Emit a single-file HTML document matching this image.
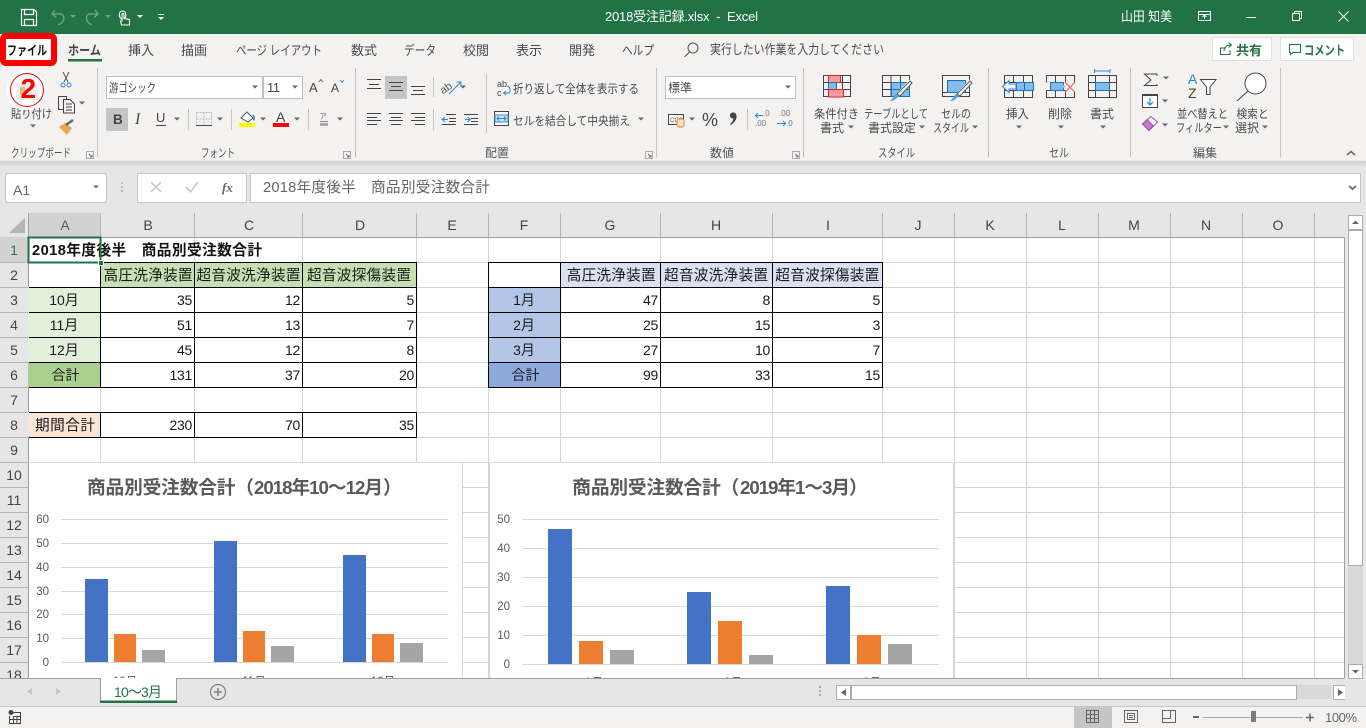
<!DOCTYPE html>
<html lang="ja">
<head>
<meta charset="utf-8">
<title>2018受注記録.xlsx - Excel</title>
<style>
html,body{margin:0;padding:0;background:#fff;overflow:hidden}
svg{display:block}
text{font-family:"Liberation Sans","Noto Sans CJK JP",sans-serif;white-space:pre}
.r{font-size:12px;fill:#4a4a4a}
.tab{font-size:13px;fill:#4a4a4a}
.g{font-size:12px;fill:#555}
.c{font-size:14.67px;fill:#1a1a1a}
.n{font-size:14px;fill:#1a1a1a;text-anchor:end;letter-spacing:-.3px}
.m{font-size:14px;fill:#1a1a1a;text-anchor:middle}
.h{font-size:14px;fill:#444;text-anchor:middle}
.y{font-size:11.5px;fill:#595959;text-anchor:end}
.x{font-size:11.5px;fill:#595959;text-anchor:middle}
.ct{font-size:18.67px;font-weight:bold;fill:#595959}
</style>
</head>
<body>
<svg xmlns="http://www.w3.org/2000/svg" width="1366" height="728" viewBox="0 0 1366 728">
<defs>
<polygon id="a" points="-3,-1.5 3,-1.5 0,1.5" fill="#666"/>
<linearGradient id="sh" x1="0" y1="0" x2="0" y2="1"><stop offset="0" stop-color="#cfcfcf"/><stop offset="1" stop-color="#e6e6e6"/></linearGradient>
</defs>

<!-- backgrounds -->
<rect width="1366" height="728" fill="#e6e6e6"/>
<rect width="1366" height="34" fill="#217346"/>
<rect y="34" width="1366" height="127" fill="#f3f2f1"/>
<rect y="161" width="1366" height="6" fill="url(#sh)"/>

<!-- title bar -->
<g fill="none" stroke="#fff" stroke-width="1.2">
<path d="M21.5 9.5H34L36.5 12V25.5H21.5Z"/><path d="M24.5 9.5V14.5H33.5V9.5"/><path d="M24.5 25.5V19.5H33.5V25.5"/>
</g>
<g fill="none" stroke="#6ba583" stroke-width="1.4">
<path d="M55 10L52 14L56 17.500"/><path d="M52.500 14H60C65 14 66 22 58 25"/>
<path d="M95 10L98 14L94 17.500"/><path d="M97.500 14H90C85 14 85 22 92 25"/>
</g>
<polygon points="70,15 76,15 73,18" fill="#6ba583"/><polygon points="105,15 111,15 108,18" fill="#6ba583"/>
<path d="M121.500 19C118.500 17 118.500 11 122.500 11C126.500 11 126.500 17 124.500 18.500" fill="none" stroke="#fff" stroke-width="1.100"/>
<path d="M121.500 25L120.500 21H122V14.500C122 13 124 13 124 14.500V18.500L129.500 19.500V25Z" fill="#217346" stroke="#fff" stroke-width="1.100"/>
<polygon points="137,15 143,15 140,18" fill="#fff"/>
<rect x="158" y="14" width="6" height="1" fill="#fff"/><polygon points="158,17 164,17 161,20" fill="#fff"/>
<text x="605" y="21" font-size="13" fill="#fff" textLength="153" lengthAdjust="spacing">2018受注記録.xlsx  -  Excel</text>
<text x="1121" y="21" font-size="13" fill="#fff" textLength="51" lengthAdjust="spacingAndGlyphs">山田 知美</text>
<g fill="none" stroke="#fff" stroke-width="1">
<rect x="1198.500" y="11.500" width="12" height="9"/><path d="M1198.500 14.500H1210.500M1204.500 19V15.500M1202.500 17L1204.500 15L1206.500 17"/>
<path d="M1246 17.500H1256"/>
<rect x="1292.500" y="13.500" width="7" height="7"/><path d="M1294.500 13.500V11.500H1301.500V18.500H1299.500"/>
<path d="M1338.500 11.500L1348.500 21.500M1348.500 11.500L1338.500 21.500"/>
</g>

<!-- tabs -->
<rect x="3" y="36" width="51" height="27" rx="3" fill="#fff" stroke="#ff0000" stroke-width="6"/>
<text x="7" y="55" font-size="13" font-weight="bold" fill="#111" textLength="40" lengthAdjust="spacingAndGlyphs">ファイル</text>
<text x="68" y="55" font-size="13" font-weight="bold" fill="#444" textLength="33" lengthAdjust="spacingAndGlyphs">ホーム</text>
<rect x="68" y="59" width="34" height="2.500" fill="#217346"/>
<text class="tab" x="128" y="55" textLength="26">挿入</text>
<text class="tab" x="181" y="55" textLength="26">描画</text>
<text class="tab" x="236" y="55" textLength="86" lengthAdjust="spacingAndGlyphs">ページ レイアウト</text>
<text class="tab" x="351" y="55" textLength="26">数式</text>
<text class="tab" x="404" y="55" textLength="32" lengthAdjust="spacingAndGlyphs">データ</text>
<text class="tab" x="463" y="55" textLength="26">校閲</text>
<text class="tab" x="516" y="55" textLength="26">表示</text>
<text class="tab" x="569" y="55" textLength="26">開発</text>
<text class="tab" x="622" y="55" textLength="32" lengthAdjust="spacingAndGlyphs">ヘルプ</text>
<g fill="none" stroke="#555" stroke-width="1.100"><circle cx="693" cy="48" r="5"/><path d="M689.500 52L684.500 57"/></g>
<text class="tab" x="710" y="54" font-size="12.500" textLength="174" lengthAdjust="spacingAndGlyphs">実行したい作業を入力してください</text>
<rect x="1212.500" y="37.500" width="59" height="23" rx="1" fill="#fff" stroke="#e1dfdd"/>
<rect x="1280.500" y="37.500" width="73" height="23" rx="1" fill="#fff" stroke="#e1dfdd"/>
<g fill="none" stroke="#217346" stroke-width="1"><path d="M1226 48H1220.500V54.500H1230V50"/><path d="M1224 51C1224 47 1227 45 1231 45M1228.500 42.500L1231.500 45L1228.500 47.500"/>
<path d="M1289.500 44.500H1300.500V52.500H1293L1290.500 54.500V52.500H1289.500Z"/></g>
<text x="1236" y="55" font-size="13" font-weight="bold" fill="#217346" textLength="26">共有</text>
<text x="1304" y="55" font-size="13" font-weight="bold" fill="#217346" textLength="41" lengthAdjust="spacingAndGlyphs">コメント</text>

<!-- ribbon separators -->
<g stroke="#c3c3c3" fill="none">
<path d="M97.500 68V157M355.500 68V157M656.500 68V157M803.500 68V157M988.500 68V157M1130.500 68V157M1280.500 68V157"/>
<path d="M188.500 109V130M231.500 109V130M308.500 109V130M433.500 77V97M433.500 109V130M486.500 74V133M747.500 109V130"/>
</g>

<!-- clipboard -->
<g fill="none" stroke="#555" stroke-width="1"><path d="M63 72L68 82M69 72L64 82"/></g>
<circle cx="63" cy="85" r="2" fill="none" stroke="#2b88d8"/><circle cx="69" cy="85" r="2" fill="none" stroke="#2b88d8"/>
<g fill="none" stroke="#444" stroke-width="1"><path d="M58.500 96.500H66.500V99M58.500 96.500V109.500H63"/><path d="M63.500 99.500H70L74.500 104V113H63.500Z"/><path d="M66 104H72M66 107H72M66 110H72"/></g>
<use href="#a" x="82" y="103"/>
<path d="M59 127L67 135L72 128L65 123Z" fill="#f0a24e"/><path d="M66 125L73 120" stroke="#666" stroke-width="2.500" fill="none"/>
<text class="r" x="11" y="118" textLength="41" lengthAdjust="spacingAndGlyphs">貼り付け</text>
<use href="#a" x="33" y="126"/>
<circle cx="26" cy="90" r="20" fill="#fff"/>
<path d="M16 84H38V100H16Z" fill="#e6e6e6" opacity=".6"/>
<rect x="20" y="87" width="5" height="8" fill="#f4b37a"/>
<circle cx="27" cy="90" r="16.500" fill="none" stroke="#ff0000" stroke-width="1"/>
<text x="20.500" y="98" font-size="28" font-weight="bold" fill="#ff0000">2</text>
<text class="g" x="11" y="157" textLength="60" lengthAdjust="spacingAndGlyphs">クリップボード</text>
<g fill="none" stroke="#777"><path d="M86.500 151.500H93.500V158.500H86.500Z" stroke="#aaa"/><path d="M89 154L92 157M92 155V157H90"/></g>

<!-- font -->
<rect x="106.500" y="76.500" width="156" height="22" fill="#fff" stroke="#c0c0c0"/>
<rect x="263.500" y="76.500" width="39" height="22" fill="#fff" stroke="#c0c0c0"/>
<text class="r" x="109" y="92" textLength="47" lengthAdjust="spacingAndGlyphs">游ゴシック</text>
<text class="r" x="267" y="92" style="font-size:13px" textLength="13">11</text>
<use href="#a" x="255" y="87"/><use href="#a" x="295" y="87"/>
<text x="309" y="92" font-size="13" fill="#444">A</text><text x="331" y="92" font-size="12" fill="#444">A</text>
<path d="M319 82L321 79.500L323 82" fill="none" stroke="#666"/><path d="M340 80L342 82.500L344 80" fill="none" stroke="#2b88d8"/>
<rect x="106" y="108" width="22" height="23" fill="#c5c5c5"/>
<text x="113" y="124" font-size="13.500" font-weight="bold" fill="#444">B</text>
<text x="135" y="124" fill="#444" style="font-family:'Liberation Serif',serif;font-size:16px;font-style:italic">I</text>
<text x="156" y="122" font-size="13" fill="#444">U</text><rect x="156" y="125" width="10" height="1" fill="#444"/>
<use href="#a" x="177" y="119"/>
<path d="M196.500 112.500H211.500V125.500H196.500ZM204 112.500V125.500M196.500 119H211.500" fill="none" stroke="#bbb" stroke-dasharray="2 1"/><rect x="196" y="125" width="16" height="1" fill="#444"/>
<use href="#a" x="220" y="119"/>
<path d="M241 118L247 112L253 118L248 122Z" fill="#fff" stroke="#555"/><path d="M253 115C255 118 254 120 253 120" fill="none" stroke="#2b88d8" stroke-width="1.500"/>
<rect x="239" y="123" width="16" height="4" fill="#ffff00"/>
<use href="#a" x="263" y="119"/>
<text x="276" y="122" font-size="14" fill="#444">A</text>
<rect x="273" y="123" width="16" height="4" fill="#ff0000"/>
<use href="#a" x="297" y="119"/>
<text x="319" y="119" font-size="8" fill="#777">ア</text><rect x="320" y="121" width="8" height="1" fill="#888"/><rect x="320" y="123" width="8" height="3" fill="#aaa"/>
<use href="#a" x="340" y="119"/>
<text class="g" x="201" y="157" textLength="34" lengthAdjust="spacingAndGlyphs">フォント</text>
<g fill="none" stroke="#777"><path d="M343.500 151.500H350.500V158.500H343.500Z" stroke="#aaa"/><path d="M346 154L349 157M349 155V157H347"/></g>

<!-- alignment -->
<rect x="385" y="76" width="22" height="23" fill="#c5c5c5"/>
<g stroke="#444" fill="none">
<path d="M367 79.500H381M369 84.500H379M367 88.500H381"/>
<path d="M389 82.500H403M391 86.500H401M389 90.500H403"/>
<path d="M411 86.500H425M413 90.500H423M411 94.500H425"/>
<path d="M367 113.500H381M367 117.500H377M367 120.500H381M367 124.500H377"/>
<path d="M389 113.500H403M391 117.500H401M389 120.500H403M391 124.500H401"/>
<path d="M411 113.500H425M415 117.500H425M411 120.500H425M415 124.500H425"/>
<path d="M446 114.500H456M449 118.500H456M449 121.500H456M442 124.500H456"/>
<path d="M464 114.500H478M471 118.500H478M471 121.500H478M464 124.500H478"/>
</g>
<path d="M448 119.500H442M445 117L442 119.500L445 122M465 119.500H470M467.500 117L470.500 119.500L467.500 122" fill="none" stroke="#2b88d8"/>
<text x="440" y="91" font-size="11" fill="#555" transform="rotate(-35 447 88)">ab</text>
<path d="M449 94L461 82M456.500 82H461V86.500" fill="none" stroke="#2b88d8"/>
<use href="#a" x="463" y="87"/>
<text x="497" y="87" font-size="9" fill="#444">ab</text><text x="497" y="96" font-size="9" fill="#444">c</text>
<path d="M503 93H509C511 91 510 86 507 86M506 91L503.500 93L506 95" fill="none" stroke="#2b88d8"/>
<text class="r" x="513" y="93" textLength="126" lengthAdjust="spacingAndGlyphs">折り返して全体を表示する</text>
<rect x="494.500" y="111.500" width="14" height="14" fill="#fff" stroke="#444"/><rect x="495" y="115" width="13" height="7" fill="#cfe4f7" stroke="#2b88d8"/>
<path d="M497 118.500H506M499 116.500L497 118.500L499 120.500M504 116.500L506 118.500L504 120.500" fill="none" stroke="#2b88d8"/>
<text class="r" x="513" y="125" textLength="117" lengthAdjust="spacingAndGlyphs">セルを結合して中央揃え</text>
<use href="#a" x="641" y="119"/>
<text class="g" x="485" y="157" textLength="24">配置</text>
<g fill="none" stroke="#777"><path d="M645.500 151.500H652.500V158.500H645.500Z" stroke="#aaa"/><path d="M648 154L651 157M651 155V157H649"/></g>

<!-- number -->
<rect x="665.500" y="76.500" width="130" height="22" fill="#fff" stroke="#c0c0c0"/>
<text class="r" x="668" y="92" textLength="24">標準</text>
<use href="#a" x="788" y="87"/>
<rect x="668.500" y="114.500" width="15" height="10" fill="#fff" stroke="#444"/><text x="670" y="122" font-size="6" fill="#444">CCC</text>
<rect x="677" y="119" width="7" height="8" rx="2" fill="#fbe3c8" stroke="#ed7d31"/>
<use href="#a" x="692" y="119"/>
<text x="702" y="126" font-size="18" fill="#444">%</text>
<path d="M733 112.500C736 112.500 737 115 736.500 117.500C736 120.500 733.500 123.500 730.500 125L730 124C732 122.500 733 120.500 733.500 118.500C731.500 118.500 730 117.500 730 115.500C730 113.500 731.500 112.500 733 112.500Z" fill="#444"/>
<text x="763" y="116" font-size="8" fill="#777">.0</text><text x="755" y="126" font-size="8" fill="#777">.00</text>
<text x="779" y="116" font-size="8" fill="#777">.00</text><text x="786" y="126" font-size="8" fill="#777">.0</text>
<path d="M755 115.500H763M758 113L755.500 115.500L758 118M777 123.500H786M783 121L785.500 123.500L783 126" fill="none" stroke="#2b88d8"/>
<text class="g" x="710" y="157" textLength="24">数値</text>
<g fill="none" stroke="#777"><path d="M792.500 151.500H799.500V158.500H792.500Z" stroke="#aaa"/><path d="M795 154L798 157M798 155V157H796"/></g>

<!-- styles -->
<g fill="none" stroke="#444">
<path d="M823.500 75.500H850.500V96.500H823.500ZM823.500 82.500H850.500M823.500 89.500H850.500M829 75.500V96.500M835.500 75.500V96.500M842.500 75.500V96.500"/>
<path d="M882.500 75.500H909.500V96.500H882.500ZM882.500 82.500H909.500M882.500 89.500H909.500M891 75.500V96.500M900.500 75.500V96.500"/>
<path d="M942.500 75.500H969.500V96.500H942.500ZM942.500 92.500H969.500"/>
</g>
<rect x="828.500" y="75.500" width="12" height="7" fill="#ff9aa2" stroke="#e2232a"/>
<rect x="828.500" y="82.500" width="8" height="7" fill="#83bbea" stroke="#1a73ba"/>
<rect x="828.500" y="89.500" width="15" height="7.500" fill="#ff9aa2" stroke="#e2232a"/>
<rect x="891.500" y="82.500" width="18" height="14" fill="#83bbea" stroke="#1a73ba"/><path d="M900.500 82.500V96.500M891.500 89.500H909.500" stroke="#1a73ba"/>
<rect x="947.500" y="80.500" width="18" height="12" fill="#83bbea" stroke="#1a73ba"/>
<path d="M911 81L898 95" stroke="#fff" stroke-width="4"/><path d="M910 81L912 83L900 96L897 94Z" fill="#fff" stroke="#555"/>
<path d="M892 101C895 100 897 98 899 96L896 94C894 95 893 99 890 101Z" fill="#5aa5e0"/>
<path d="M971 81L958 95" stroke="#fff" stroke-width="4"/><path d="M970 81L972 83L960 96L957 94Z" fill="#fff" stroke="#555"/>
<path d="M952 101C955 100 957 98 959 96L956 94C954 95 953 99 950 101Z" fill="#5aa5e0"/>
<text class="r" x="814" y="118" textLength="45" lengthAdjust="spacingAndGlyphs">条件付き</text>
<text class="r" x="820" y="132" textLength="24">書式</text><use href="#a" x="851" y="127"/>
<text class="r" x="864" y="118" textLength="64" lengthAdjust="spacingAndGlyphs">テーブルとして</text>
<text class="r" x="868" y="132" textLength="48">書式設定</text><use href="#a" x="922" y="127"/>
<text class="r" x="941" y="118" textLength="30" lengthAdjust="spacingAndGlyphs">セルの</text>
<text class="r" x="933" y="132" textLength="36" lengthAdjust="spacingAndGlyphs">スタイル</text><use href="#a" x="975" y="127"/>
<text class="g" x="878" y="157" textLength="37" lengthAdjust="spacingAndGlyphs">スタイル</text>

<!-- cells -->
<g fill="none" stroke="#444">
<path d="M1004.500 75.500H1032.500V97.500H1004.500ZM1004.500 82.500H1016M1004.500 90.500H1032.500M1013.500 75.500V82M1013.500 90.500V97.500M1023.500 75.500V97.500"/>
<path d="M1046.500 75.500H1074.500V82.500M1046.500 82.500V75.500M1046.500 90.500V97.500H1074.500V92M1046.500 90.500H1065M1055.500 90.500V97.500M1065.500 75.500V82M1065.500 90.500V97.500M1055.500 75.500V82"/>
<path d="M1088.500 75.500H1116.500V97.500H1088.500ZM1088.500 82.500H1116.500M1088.500 90.500H1116.500M1095.500 75.500V97.500M1109.500 75.500V97.500"/>
</g>
<rect x="1016.500" y="82.500" width="17" height="8" fill="#83bbea" stroke="#1a73ba"/><path d="M1024.500 82.500V90.500" stroke="#1a73ba"/>
<path d="M1002.500 86.500L1009 80.500V84H1016V89H1009V92.500Z" fill="#f3f2f1" stroke="#2b88d8"/>
<rect x="1050.500" y="82.500" width="13" height="8" fill="#83bbea" stroke="#1a73ba"/><path d="M1059.500 82.500L1066 86.500L1059.500 90.500Z" fill="#83bbea"/>
<path d="M1065 82L1075 92.500M1075 82L1065 92.500" stroke="#ff4d4d" fill="none"/>
<rect x="1095.500" y="82.500" width="14" height="8" fill="#83bbea" stroke="#1a73ba"/>
<path d="M1094.500 69V73M1110 69V73M1094.500 71H1110" stroke="#2b88d8" fill="none"/>
<text class="r" x="1006" y="118" textLength="23" lengthAdjust="spacingAndGlyphs">挿入</text><use href="#a" x="1019" y="127"/>
<text class="r" x="1048" y="118" textLength="24">削除</text><use href="#a" x="1061" y="127"/>
<text class="r" x="1090" y="118" textLength="24">書式</text><use href="#a" x="1103" y="127"/>
<text class="g" x="1049" y="157" textLength="20" lengthAdjust="spacingAndGlyphs">セル</text>

<!-- editing -->
<path d="M1157 76V74H1144.500L1151 80L1144.500 85.500H1157V84" fill="none" stroke="#444"/>
<use href="#a" x="1166" y="78"/>
<rect x="1142.500" y="94.500" width="15" height="13" fill="#fff" stroke="#444"/><rect x="1142" y="94" width="16" height="2" fill="#444"/>
<path d="M1150 98V105M1147 102L1150 105L1153 102" fill="none" stroke="#2b88d8" stroke-width="1.200"/>
<use href="#a" x="1165" y="101"/>
<path d="M1142.500 124L1151 116.500L1157.500 122L1149 130.500Z" fill="#fff" stroke="#a349b0"/><path d="M1142.500 124L1147 119.500L1153 125.500L1149 130.500Z" fill="#c27ccc" stroke="#a349b0"/>
<use href="#a" x="1165" y="125"/>
<text x="1188" y="84" font-size="14" fill="#2b88d8">A</text>
<text x="1188" y="98" font-size="14" fill="#444">Z</text>
<path d="M1200.500 79.500H1216L1210 87V94.500H1206.500V87Z" fill="#fff" stroke="#444"/>
<text class="r" x="1177" y="118" textLength="51" lengthAdjust="spacingAndGlyphs">並べ替えと</text>
<text class="r" x="1176" y="132" textLength="46" lengthAdjust="spacingAndGlyphs">フィルター</text><use href="#a" x="1226" y="127"/>
<circle cx="1255.500" cy="83.500" r="10.500" fill="#fff" stroke="#444"/><path d="M1248 91L1237 101" stroke="#444" fill="none"/>
<text class="r" x="1236.500" y="118" textLength="32" lengthAdjust="spacingAndGlyphs">検索と</text>
<text class="r" x="1235" y="132" textLength="24">選択</text><use href="#a" x="1265" y="127"/>
<text class="g" x="1193" y="157" textLength="24">編集</text>
<path d="M1347 155L1351 151.500L1355 155" fill="none" stroke="#666" stroke-width="1.500"/>

<!-- formula bar -->
<rect x="5.500" y="173.500" width="101" height="29" fill="#fff" stroke="#c6c6c6"/>
<text x="13" y="195" font-size="14" fill="#666">A1</text>
<use href="#a" x="96" y="187"/>
<rect x="121" y="182" width="2" height="2" fill="#bbb"/><rect x="121" y="186" width="2" height="2" fill="#bbb"/><rect x="121" y="190" width="2" height="2" fill="#bbb"/>
<rect x="137.500" y="173.500" width="109" height="29" fill="#fff" stroke="#c6c6c6"/>
<path d="M151 182L161 192M161 182L151 192" stroke="#c4c4c4" stroke-width="1.500" fill="none"/>
<path d="M186 187L190.500 192L198 182" stroke="#c4c4c4" stroke-width="1.500" fill="none"/>
<text x="222" y="192" font-size="13" font-style="italic" font-weight="bold" fill="#666" style="font-family:'Liberation Serif',serif">fx</text>
<rect x="250.500" y="173.500" width="1110" height="29" fill="#fff" stroke="#c6c6c6"/>
<text x="263" y="192" font-size="14.670" fill="#666" textLength="227">2018年度後半　商品別受注数合計</text>
<path d="M1349 186L1352.500 189L1356 186" fill="none" stroke="#777" stroke-width="2"/>

<!-- sheet -->
<rect x="28" y="237" width="1316" height="441" fill="#fff"/>
<rect x="28" y="213" width="72" height="24" fill="#d2d2d2"/>
<rect x="0" y="237" width="28" height="25" fill="#d2d2d2"/>
<polygon points="25,218 25,233 9,233" fill="#b4b4b4"/>
<path d="M100.500 237V678M194.500 237V678M302.500 237V678M416.500 237V678M488.500 237V678M560.500 237V678M660.500 237V678M772.500 237V678M882.500 237V678M954.500 237V678M1026.500 237V678M1098.500 237V678M1170.500 237V678M1242.500 237V678M1314.500 237V678" stroke="#d4d4d4" fill="none"/>
<path d="M28 262.500H1344M28 287.500H1344M28 312.500H1344M28 337.500H1344M28 362.500H1344M28 387.500H1344M28 412.500H1344M28 437.500H1344M28 462.500H1344M28 487.500H1344M28 512.500H1344M28 537.500H1344M28 562.500H1344M28 587.500H1344M28 612.500H1344M28 637.500H1344M28 662.500H1344" stroke="#d4d4d4" fill="none"/>
<!-- header lines -->
<path d="M100.500 213V237M194.500 213V237M302.500 213V237M416.500 213V237M488.500 213V237M560.500 213V237M660.500 213V237M772.500 213V237M882.500 213V237M954.500 213V237M1026.500 213V237M1098.500 213V237M1170.500 213V237M1242.500 213V237M1314.500 213V237" stroke="#b5b5b5" fill="none"/>
<path d="M0 262.500H28M0 287.500H28M0 312.500H28M0 337.500H28M0 362.500H28M0 387.500H28M0 412.500H28M0 437.500H28M0 462.500H28M0 487.500H28M0 512.500H28M0 537.500H28M0 562.500H28M0 587.500H28M0 612.500H28M0 637.500H28M0 662.500H28" stroke="#b5b5b5" fill="none"/>
<path d="M28 237.500H1344.500V678M28.500 213V678" stroke="#a0a0a0" fill="none"/>
<g class="hdr">
<text class="h" x="65" y="230" style="fill:#3a6b52">A</text>
<text class="h" x="148" y="230">B</text><text class="h" x="249" y="230">C</text><text class="h" x="360" y="230">D</text><text class="h" x="452" y="230">E</text>
<text class="h" x="524" y="230">F</text><text class="h" x="610" y="230">G</text><text class="h" x="716" y="230">H</text><text class="h" x="828" y="230">I</text><text class="h" x="918" y="230">J</text>
<text class="h" x="990" y="230">K</text><text class="h" x="1062" y="230">L</text><text class="h" x="1134" y="230">M</text><text class="h" x="1206" y="230">N</text><text class="h" x="1278" y="230">O</text>
<text class="h" x="14" y="255" style="fill:#3a6b52">1</text><text class="h" x="14" y="280">2</text><text class="h" x="14" y="305">3</text><text class="h" x="14" y="330">4</text><text class="h" x="14" y="355">5</text><text class="h" x="14" y="380">6</text><text class="h" x="14" y="405">7</text><text class="h" x="14" y="430">8</text><text class="h" x="14" y="455">9</text>
<text class="h" x="14" y="480">10</text><text class="h" x="14" y="505">11</text><text class="h" x="14" y="530">12</text><text class="h" x="14" y="555">13</text><text class="h" x="14" y="580">14</text><text class="h" x="14" y="605">15</text><text class="h" x="14" y="630">16</text><text class="h" x="14" y="655">17</text><text class="h" x="14" y="680">18</text>
</g>

<!-- fills table 1 -->
<rect x="100" y="262" width="316" height="25" fill="#c6e0b4"/>
<rect x="28" y="287" width="72" height="75" fill="#e2efda"/>
<rect x="28" y="362" width="72" height="25" fill="#a9d08e"/>
<rect x="28" y="412" width="72" height="25" fill="#fce4d6"/>
<!-- fills table 2 -->
<rect x="560" y="262" width="322" height="25" fill="#d9e1f2"/>
<rect x="488" y="287" width="72" height="75" fill="#b4c6e7"/>
<rect x="488" y="362" width="72" height="25" fill="#8ea9db"/>
<path d="M100.500 262.500H416.500V387.500M29 287.500H416.500M29 312.500H416.500M29 337.500H416.500M29 362.500H416.500M29 387.500H416.500M100.500 262.500V387.500M194.500 262.500V387.500M302.500 262.500V387.500M29 412.500H416.500M29 437.500H416.500M100.500 412.500V437.500M194.500 412.500V437.500M302.500 412.500V437.500M416.500 412.500V437.500" stroke="#000" fill="none"/>
<path d="M488.500 262.500H882.500V387.500H488.500ZM488.500 287.500H882.500M488.500 312.500H882.500M488.500 337.500H882.500M488.500 362.500H882.500M560.500 262.500V387.500M660.500 262.500V387.500M772.500 262.500V387.500" stroke="#000" fill="none"/>

<!-- cell text -->
<text x="32" y="255" font-size="14.670" font-weight="bold" fill="#111" textLength="230">2018年度後半　商品別受注数合計</text>
<text class="c" x="103.500" y="280" textLength="89">高圧洗浄装置</text>
<text class="c" x="196.500" y="280" textLength="104">超音波洗浄装置</text>
<text class="c" x="307" y="280" textLength="104">超音波探傷装置</text>
<text class="m" x="64" y="305">10月</text><text class="m" x="64" y="330">11月</text><text class="m" x="64" y="355">12月</text>
<text class="m" x="65.500" y="380">合計</text>
<text class="c" x="35" y="430" textLength="60">期間合計</text>
<text class="n" x="192" y="305">35</text><text class="n" x="300" y="305">12</text><text class="n" x="414" y="305">5</text>
<text class="n" x="192" y="330">51</text><text class="n" x="300" y="330">13</text><text class="n" x="414" y="330">7</text>
<text class="n" x="192" y="355">45</text><text class="n" x="300" y="355">12</text><text class="n" x="414" y="355">8</text>
<text class="n" x="192" y="380">131</text><text class="n" x="300" y="380">37</text><text class="n" x="414" y="380">20</text>
<text class="n" x="192" y="430">230</text><text class="n" x="300" y="430">70</text><text class="n" x="414" y="430">35</text>

<text class="c" x="566.700" y="280" textLength="89">高圧洗浄装置</text>
<text class="c" x="664" y="280" textLength="104">超音波洗浄装置</text>
<text class="c" x="775.300" y="280" textLength="104">超音波探傷装置</text>
<text class="m" x="524" y="305">1月</text><text class="m" x="524" y="330">2月</text><text class="m" x="524" y="355">3月</text><text class="m" x="525.500" y="380">合計</text>
<text class="n" x="658" y="305">47</text><text class="n" x="770" y="305">8</text><text class="n" x="880" y="305">5</text>
<text class="n" x="658" y="330">25</text><text class="n" x="770" y="330">15</text><text class="n" x="880" y="330">3</text>
<text class="n" x="658" y="355">27</text><text class="n" x="770" y="355">10</text><text class="n" x="880" y="355">7</text>
<text class="n" x="658" y="380">99</text><text class="n" x="770" y="380">33</text><text class="n" x="880" y="380">15</text>

<!-- selection -->
<rect x="28.500" y="237.500" width="72" height="25" fill="none" stroke="#217346" stroke-width="2"/>
<rect x="98.500" y="260.500" width="5" height="5" fill="#217346" stroke="#fff" stroke-width="1"/>

<!-- chart 1 -->
<rect x="29.500" y="462.500" width="433" height="225" fill="#fff" stroke="#d9d9d9"/>
<path d="M29.500 462V688" stroke="#fff" fill="none"/>
<text class="ct" x="87" y="494" textLength="167">商品別受注数合計（</text>
<text class="ct" x="254" y="494" textLength="129">2018年10～12月</text>
<text class="ct" x="383" y="494">）</text>
<path d="M61 519.500H448M61 543.500H448M61 567.500H448M61 591.500H448M61 614.500H448M61 638.500H448M61 662.500H448" stroke="#d9d9d9" fill="none"/>
<text class="y" x="49" y="523">60</text><text class="y" x="49" y="547">50</text><text class="y" x="49" y="571">40</text><text class="y" x="49" y="595">30</text><text class="y" x="49" y="618">20</text><text class="y" x="49" y="642">10</text><text class="y" x="49" y="666">0</text>
<g fill="#4472c4"><rect x="85" y="579" width="23" height="83"/><rect x="214" y="541" width="23" height="121"/><rect x="343" y="555" width="23" height="107"/></g>
<g fill="#ed7d31"><rect x="114" y="634" width="22" height="28"/><rect x="243" y="631" width="22" height="31"/><rect x="372" y="634" width="22" height="28"/></g>
<g fill="#a5a5a5"><rect x="142" y="650" width="23" height="12"/><rect x="271" y="646" width="23" height="16"/><rect x="400" y="643" width="23" height="19"/></g>
<text class="x" x="125" y="685">10月</text><text class="x" x="254" y="685">11月</text><text class="x" x="383" y="685">12月</text>

<!-- chart 2 -->
<rect x="489.500" y="462.500" width="464" height="225" fill="#fff" stroke="#d9d9d9"/>
<text class="ct" x="572.300" y="494" textLength="167">商品別受注数合計（</text>
<text class="ct" x="740" y="494" textLength="110">2019年1～3月</text>
<text class="ct" x="849" y="494">）</text>
<path d="M522 519.500H939M522 548.500H939M522 577.500H939M522 606.500H939M522 635.500H939M522 664.500H939" stroke="#d9d9d9" fill="none"/>
<text class="y" x="510" y="523">50</text><text class="y" x="510" y="552">40</text><text class="y" x="510" y="581">30</text><text class="y" x="510" y="610">20</text><text class="y" x="510" y="639">10</text><text class="y" x="510" y="668">0</text>
<g fill="#4472c4"><rect x="548" y="529" width="24" height="135"/><rect x="687" y="592" width="24" height="72"/><rect x="826" y="586" width="24" height="78"/></g>
<g fill="#ed7d31"><rect x="579" y="641" width="24" height="23"/><rect x="718" y="621" width="24" height="43"/><rect x="857" y="635" width="24" height="29"/></g>
<g fill="#a5a5a5"><rect x="610" y="650" width="24" height="14"/><rect x="749" y="655" width="24" height="9"/><rect x="888" y="644" width="24" height="20"/></g>
<text class="x" x="594" y="686">1月</text><text class="x" x="733" y="686">2月</text><text class="x" x="872" y="686">3月</text>

<!-- sheet bottom bar -->
<rect x="0" y="678" width="1366" height="28" fill="#e6e6e6"/>
<path d="M0 678.500H1344.500" stroke="#a0a0a0" fill="none"/>
<polygon points="32,688 27,691.500 32,695" fill="#c4c4c4"/><polygon points="56,688 61,691.500 56,695" fill="#c4c4c4"/>
<rect x="100.500" y="678" width="76" height="24" fill="#fff"/>
<path d="M100.500 678V702M176.500 678V702" stroke="#a0a0a0" fill="none"/>
<rect x="100" y="700.500" width="77" height="2.500" fill="#217346"/>
<text x="114" y="697" font-size="14" fill="#217346" textLength="48">10～3月</text>
<circle cx="218" cy="692" r="7.500" fill="none" stroke="#808080" stroke-width="1.200"/>
<path d="M214 692H222M218 688V696" stroke="#808080" stroke-width="1.500" fill="none"/>
<rect x="819" y="686" width="2" height="2" fill="#aaa"/><rect x="819" y="690" width="2" height="2" fill="#aaa"/><rect x="819" y="694" width="2" height="2" fill="#aaa"/>

<!-- horizontal scrollbar -->
<rect x="851" y="685" width="480" height="14" fill="#d9d9d9"/>
<rect x="836.500" y="685.500" width="14" height="14" fill="#fff" stroke="#ababab"/>
<polygon points="846,689 841,692.500 846,696" fill="#666"/>
<rect x="851.500" y="685.500" width="445" height="14" fill="#fff" stroke="#ababab"/>
<rect x="1333.500" y="685.500" width="14" height="14" fill="#fff" stroke="#ababab"/>
<polygon points="1338,689 1343,692.500 1338,696" fill="#666"/>

<!-- vertical scrollbar -->
<rect x="1345" y="212" width="21" height="494" fill="#e6e6e6"/>
<rect x="1348" y="230" width="15" height="434" fill="#d9d9d9"/>
<rect x="1348.500" y="215.500" width="14" height="14" fill="#fff" stroke="#ababab"/>
<polygon points="1352,224 1359,224 1355.500,220.500" fill="#666"/>
<rect x="1348.500" y="230.500" width="14" height="335" fill="#fff" stroke="#ababab"/>
<rect x="1348.500" y="664.500" width="14" height="14" fill="#fff" stroke="#ababab"/>
<polygon points="1352,670 1359,670 1355.500,673.500" fill="#666"/>

<!-- status bar -->
<rect x="0" y="706" width="1366" height="22" fill="#f3f2f1"/>
<path d="M0 706.500H1366" stroke="#c8c8c8" fill="none"/>
<g fill="none" stroke="#444"><path d="M13.500 712.500H20.500V723.500H9.500V716M9.500 719.500H20.500M13 716.500H20.500M13.500 716V723.500M17 716V723.500"/></g>
<circle cx="11" cy="712.500" r="2.500" fill="#444"/>
<rect x="1074" y="706" width="38" height="22" fill="#c5c5c5"/>
<g fill="none" stroke="#666">
<path d="M1086.500 710.500H1098.500V722.500H1086.500ZM1090.500 710.500V722.500M1094.500 710.500V722.500M1086.500 714.500H1098.500M1086.500 718.500H1098.500"/>
<path d="M1124.500 710.500H1137.500V722.500H1124.500ZM1127.500 713.500H1134.500V719.500H1127.500ZM1129 715.500H1133M1129 717.500H1133"/>
<path d="M1162.500 710.500H1175.500V722.500H1162.500ZM1162.500 718.500H1170.500V710.500"/>
</g>
<rect x="1193" y="716" width="6" height="2" fill="#666"/>
<rect x="1203" y="717" width="100" height="1" fill="#aaa"/>
<rect x="1251" y="711" width="5" height="11" fill="#7b7b7b"/>
<path d="M1306 717.500H1314M1310 713.500V721.500" stroke="#666" stroke-width="1.500" fill="none"/>
<text x="1325" y="722" font-size="13" fill="#666" textLength="32">100%</text>
</svg>
</body>
</html>
